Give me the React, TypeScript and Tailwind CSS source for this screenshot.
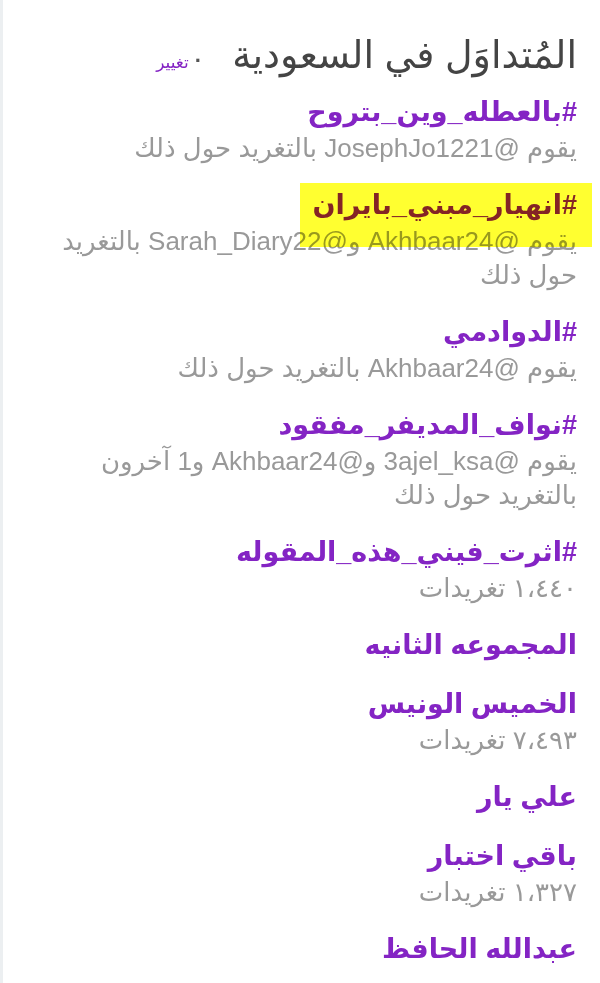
import React from "react";

type Trend = { name: string; sub?: string; highlight?: boolean };

const trends: Trend[] = [
  { name: "#بالعطله_وين_بتروح", sub: "يقوم @JosephJo1221 بالتغريد حول ذلك" },
  { name: "#انهيار_مبني_بايران", sub: "يقوم @Akhbaar24 و@Sarah_Diary22 بالتغريد حول ذلك", highlight: true },
  { name: "#الدوادمي", sub: "يقوم @Akhbaar24 بالتغريد حول ذلك" },
  { name: "#نواف_المديفر_مفقود", sub: "يقوم @3ajel_ksa و@Akhbaar24 و1 آخرون بالتغريد حول ذلك" },
  { name: "#اثرت_فيني_هذه_المقوله", sub: "١،٤٤٠ تغريدات" },
  { name: "المجموعه الثانيه" },
  { name: "الخميس الونيس", sub: "٧،٤٩٣ تغريدات" },
  { name: "علي يار" },
  { name: "باقي اختبار", sub: "١،٣٢٧ تغريدات" },
  { name: "عبدالله الحافظ" },
];

export default function App() {
  return (
    <div
      dir="rtl"
      className="h-[983px] w-[600px] overflow-hidden border-l-[3px] border-[#eceff1] bg-white pr-[23px] pl-[38px] pt-[33px] font-['Liberation_Sans','DejaVu_Sans',sans-serif]"
    >
      <div className="flex items-baseline">
        <h3 className="text-[38px] leading-[44px] font-normal text-[#444]">المُتداوَل في السعودية</h3>
        <span className="mr-[30px] text-[22px] font-bold text-[#555]">·</span>
        <a className="mr-[6px] text-[17px] text-[#8424c4]">تغيير</a>
      </div>

      <ul className="mt-[16px] flex flex-col gap-[21px]">
        {trends.map((t) => (
          <li key={t.name} className="relative">
            {t.highlight && (
              <div className="pointer-events-none absolute -top-[3px] -right-[15px] left-[259px] h-[64px] bg-[#ffff30] mix-blend-multiply" />
            )}
            <div className="text-[27px] leading-[38px] font-bold text-[#8424c4]">{t.name}</div>
            {t.sub && <div className="text-[26px] leading-[34px] text-[#999]">{t.sub}</div>}
          </li>
        ))}
      </ul>
    </div>
  );
}
